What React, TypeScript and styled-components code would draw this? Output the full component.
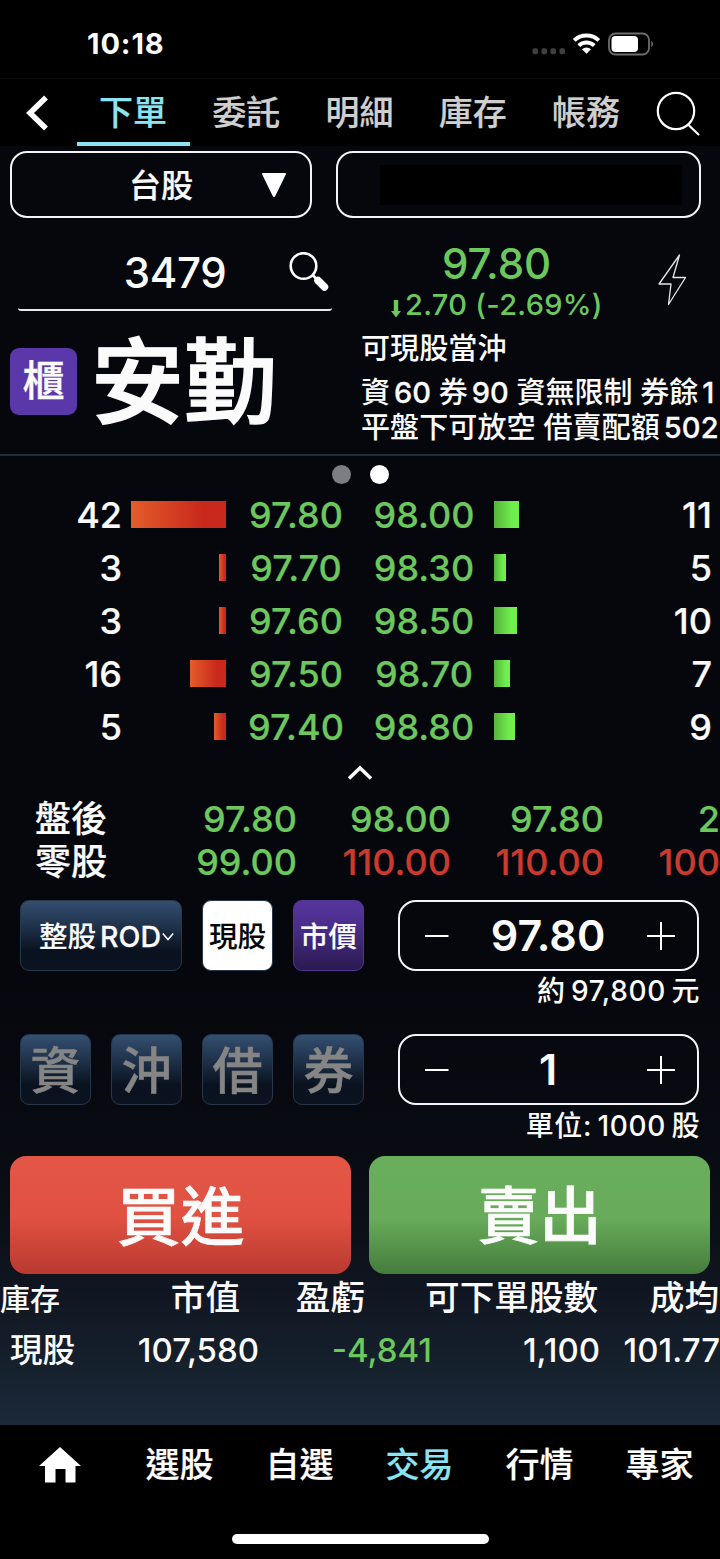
import React from "react";
import styled, { createGlobalStyle } from "styled-components";

const GREEN = "#6cc75d";
const RED = "#cb3a2e";
const CYAN = "#8be4f1";

const Global = createGlobalStyle`
  * { box-sizing: border-box; }
  body {
    margin: 0;
    background: #000;
    color: #fbfbfc;
    font-family: Inter, "Noto Sans CJK TC", sans-serif;
    font-weight: 500;
  }
  button { font: inherit; color: inherit; background: none; border: 0; padding: 0; margin: 0; }
`;

const Screen = styled.div`
  width: 720px;
  height: 1559px;
  overflow: hidden;
  display: flex;
  flex-direction: column;
  white-space: nowrap;
`;

const StatusBar = styled.header`
  height: 79px;
  flex: none;
  display: flex;
  align-items: center;
  padding: 9px 66px 0 87px;
  border-bottom: 1px solid #0b0b0c;
`;

const Clock = styled.time`
  flex: 1;
  font-size: 29px;
  font-weight: 700;
  letter-spacing: 0.9px;
`;

const TopNav = styled.nav`
  height: 67px;
  flex: none;
  display: flex;
  align-items: stretch;
`;

const NavIcon = styled.button<{ $pad: number }>`
  width: 77px;
  flex: none;
  display: flex;
  align-items: center;
  justify-content: center;
  padding-right: ${(p) => p.$pad}px;
`;

const Tab = styled.button<{ $active?: boolean }>`
  flex: 1;
  padding: 4px 1px 0 0;
  font-size: 34px;
  line-height: 59px;
  color: ${(p) => (p.$active ? CYAN : "#cfcfcf")};
  -webkit-text-stroke: 0.2px;
  border-bottom: 4px solid ${(p) => (p.$active ? CYAN : "transparent")};
`;

const Body = styled.main`
  height: 1279px;
  flex: none;
  display: flex;
  flex-direction: column;
  background: linear-gradient(180deg, #06070d 0, #06070d 820px, #090b12 1000px, #0b0f17 1080px, #101621 1144px, #15202c 1214px, #1b2939 1279px);
`;

const SelectRow = styled.div`
  display: flex;
  gap: 24px;
  padding: 5px 0 0 10px;
  flex: none;
`;

const SelectBox = styled.button<{ $w: number }>`
  width: ${(p) => p.$w}px;
  height: 67px;
  border: 2px solid #f4f4f6;
  border-radius: 17px;
  display: flex;
  align-items: center;
  font-size: 32px;
`;

const SelectLabel = styled.span`
  width: 126px;
  margin: 0 38px 3px 86px;
  text-align: center;
  -webkit-text-stroke: 0.2px;
`;

const Redacted = styled.span`
  width: 302px;
  height: 40px;
  margin-left: 42px;
  background: #000;
`;

const Quote = styled.section`
  height: 238px;
  flex: none;
  display: flex;
  border-bottom: 2px solid #222d37;
`;

const QuoteLeft = styled.div`
  width: 361px;
  flex: none;
`;

const CodeField = styled.div`
  width: 314px;
  height: 68px;
  margin: 25px 0 0 18px;
  border-bottom: 2px solid #e9e9ec;
  border-radius: 3px;
  display: flex;
  align-items: center;
  padding-bottom: 8px;
`;

const Code = styled.span`
  width: 271px;
  padding-left: 43px;
  text-align: center;
  font-size: 42px;
  letter-spacing: -0.3px;
`;

const NameRow = styled.div`
  height: 141px;
  display: flex;
  align-items: center;
  padding-left: 10px;
`;

const Market = styled.span`
  width: 67px;
  height: 67px;
  border-radius: 9px;
  background: #5a38a9;
  font-size: 42px;
  line-height: 66px;
  text-align: center;
  -webkit-text-stroke: 0.3px;
`;

const StockName = styled.h1`
  margin: 0 0 0 14px;
  font-size: 93px;
  line-height: 140px;
  font-weight: 500;
  -webkit-text-stroke: 1.4px;
`;

const QuoteRight = styled.div`
  flex: 1;
  min-width: 0;
`;

const PriceRow = styled.div`
  height: 106px;
  display: flex;
  align-items: center;
  color: ${GREEN};
`;

const PriceBlock = styled.div`
  width: 271px;
  padding-top: 22px;
  text-align: center;
`;

const Price = styled.div`
  font-size: 42px;
  line-height: 46px;
  letter-spacing: -0.1px;
`;

const Change = styled.div`
  font-size: 29px;
  line-height: 36px;
  letter-spacing: 0.3px;
  padding-left: 1px;

  svg { margin-right: 4px; vertical-align: -3px; }
`;

const Bolt = styled.svg`
  margin: 18px 0 0 25px;
`;

const Info = styled.div<{ $h: number; $ls?: number }>`
  font-size: 29px;
  height: ${(p) => p.$h}px;
  line-height: ${(p) => p.$h}px;
  letter-spacing: ${(p) => p.$ls ?? 0}px;
`;

const Figure = styled.span<{ $after?: number }>`
  margin-left: 4px;
  margin-right: ${(p) => p.$after ?? 0}px;
  -webkit-text-stroke: 0.3px;
`;

const Dots = styled.div`
  height: 32px;
  flex: none;
  display: flex;
  justify-content: center;
  gap: 19px;
  padding-top: 9px;
`;

const Dot = styled.i<{ $on?: boolean }>`
  width: 19px;
  height: 19px;
  border-radius: 50%;
  background: ${(p) => (p.$on ? "#fff" : "#7d7e83")};
`;

const DepthRow = styled.div`
  height: 53px;
  flex: none;
  display: grid;
  grid-template-columns: 122px 104px 140px 116px 12px 120px 98px;
  align-items: center;
  font-size: 36px;
  -webkit-text-stroke: 0.2px;
`;

const Volume = styled.span`
  text-align: right;
`;

const BidTrack = styled.span`
  display: flex;
  justify-content: flex-end;
`;

const AskTrack = styled.span`
  grid-column: 6;
  display: flex;
`;

const Bar = styled.i<{ $side: "bid" | "ask" }>`
  height: 27px;
  background: ${(p) =>
    p.$side === "bid"
      ? "linear-gradient(90deg, #e45c2b, #c9291c 75%)"
      : "linear-gradient(90deg, #55b43c, #70ee4c 75%)"};
`;

const DepthPrice = styled.span`
  text-align: center;
  color: ${GREEN};
`;

const Collapse = styled.button`
  height: 44px;
  flex: none;
  display: flex;
  justify-content: center;
  padding-top: 12px;
`;

const SessionRow = styled.div`
  height: 43px;
  flex: none;
  display: grid;
  grid-template-columns: 117px 180px 154px 153px 116px;
  align-items: center;
  font-size: 36px;
  line-height: 43px;
`;

const SessionLabel = styled.span`
  padding: 1px 0 0 35px;
  -webkit-text-stroke: 0.2px;
`;

const SessionValue = styled.span<{ $c: string }>`
  text-align: right;
  color: ${(p) => p.$c};
  -webkit-text-stroke: 0.2px;
`;

const ControlRow = styled.div<{ $mt: number }>`
  height: 71px;
  flex: none;
  display: flex;
  margin-top: ${(p) => p.$mt}px;
  padding-left: 20px;
  gap: 20px;
`;

const Chip = styled.button<{ $w?: number; $kind?: "cash" | "market"; $big?: boolean }>`
  width: ${(p) => p.$w ?? 71}px;
  height: 71px;
  flex: none;
  border-radius: 9px;
  border: 1.5px solid ${(p) => (p.$kind === "market" ? "#53368f" : "#26374a")};
  background: ${(p) =>
    p.$kind === "cash"
      ? "#fff"
      : p.$kind === "market"
        ? "linear-gradient(180deg, #56359d 0%, #4b2e8c 35%, #2a1a50 100%)"
        : "linear-gradient(180deg, #344f70 0%, #1d2f47 40%, #0a121f 72%, #0b1320 100%)"};
  color: ${(p) => (p.$kind === "cash" ? "#050505" : p.$big ? "#858585" : "#fbfbfc")};
  font-size: ${(p) => (p.$big ? 50 : 28.5)}px;
  line-height: 68px;
  padding-top: ${(p) => (p.$big ? 3 : 2)}px;
  display: flex;
  align-items: center;
  justify-content: center;
  -webkit-text-stroke: ${(p) => (p.$big ? 0.5 : 0.1)}px;
`;

const OrderType = styled.span`
  display: flex;
  align-items: center;
  padding-left: 11px;
`;

const Stepper = styled.div`
  width: 301px;
  height: 71px;
  margin-left: 14px;
  border: 2px solid #f4f4f6;
  border-radius: 18px;
  display: flex;
  align-items: center;
  justify-content: space-between;
  padding: 0 22px 0 25px;
`;

const StepValue = styled.span`
  flex: 1;
  text-align: center;
  font-size: 43px;
  font-weight: 600;
  margin-bottom: 1px;
`;

const Note = styled.div<{ $h: number }>`
  height: ${(p) => p.$h}px;
  line-height: ${(p) => p.$h}px;
  flex: none;
  padding: 1px 20px 0 0;
  text-align: right;
  font-size: 28px;
  letter-spacing: 0.6px;
  word-spacing: -2.5px;
`;

const Actions = styled.div`
  display: flex;
  flex: none;
  gap: 18px;
  padding: 0 10px;
  margin-top: 10px;
`;

const Action = styled.button<{ $sell?: boolean }>`
  flex: 1;
  height: 118px;
  border-radius: 16px;
  font-size: ${(p) => (p.$sell ? 62 : 64)}px;
  font-weight: 500;
  -webkit-text-stroke: 0.7px;
  padding-top: 3px;
  line-height: 115px;
  background: ${(p) =>
    p.$sell
      ? "linear-gradient(180deg, #69ae5d 0%, #68ac5b 52%, #457c3c 100%)"
      : "linear-gradient(180deg, #e35646 0%, #e05142 52%, #b93930 100%)"};
`;

const HoldingRow = styled.div<{ $h: number }>`
  height: ${(p) => p.$h}px;
  line-height: ${(p) => p.$h}px;
  flex: none;
  display: flex;
`;

const HoldCell = styled.span<{ $w: number; $size?: number; $c?: string; $left?: number; $top?: number }>`
  width: ${(p) => p.$w}px;
  flex: none;
  text-align: ${(p) => (p.$left === undefined ? "right" : "left")};
  padding: ${(p) => p.$top ?? 0}px 0 0 ${(p) => p.$left ?? 0}px;
  font-size: ${(p) => p.$size ?? 34.6}px;
  color: ${(p) => p.$c ?? "inherit"};
`;

const BottomNav = styled.nav`
  height: 80px;
  flex: none;
  display: flex;
  align-items: center;
`;

const NavItem = styled.button<{ $active?: boolean }>`
  flex: 1;
  padding-right: 1px;
  font-size: 34px;
  line-height: 78px;
  color: ${(p) => (p.$active ? CYAN : "#fff")};
  display: flex;
  align-items: center;
  justify-content: center;
  -webkit-text-stroke: 0.2px;
`;

const HomeBar = styled.div`
  width: 257px;
  height: 10px;
  margin: 29px 0 0 232px;
  border-radius: 5px;
  background: #fff;
`;

const StatusIcons = () => (
  <svg width="122" height="28" viewBox="0 0 122 28" fill="none">
    {[0, 9, 18, 27].map((x) => (
      <rect key={x} x={x + 0.5} y="18.2" width="5.5" height="6" rx="1.6" fill="#3f3f41" />
    ))}
    <g stroke="#fff" strokeWidth="4">
      <path d="M42.2 10.4a18 18 0 0 1 24.6 0" />
      <path d="M46.8 15.6a11.4 11.4 0 0 1 15.4 0" />
    </g>
    <path d="M50 19.2a6.6 6.6 0 0 1 9 0l-4.5 4.6z" fill="#fff" />
    <rect x="77" y="3.5" width="40" height="21" rx="6.5" stroke="#6d6d6f" strokeWidth="1.8" />
    <rect x="79.5" y="6" width="26.5" height="16" rx="4" fill="#fff" />
    <path d="M119.3 10.5q3.6 3.5 0 7z" fill="#6d6d6f" />
  </svg>
);

const BackIcon = () => (
  <svg width="24" height="36" viewBox="0 0 24 36" fill="none" stroke="#fff" strokeWidth="5.5">
    <path d="M21 2.5 5 18l16 15.5" />
  </svg>
);

const SearchIcon = () => (
  <svg width="46" height="46" viewBox="0 0 46 46" fill="none" stroke="#fff" strokeWidth="2.2">
    <circle cx="21" cy="21" r="18.2" />
    <path d="m33 34.5 11 10.5" />
  </svg>
);

const LoupeIcon = () => (
  <svg width="40" height="40" viewBox="0 0 40 40" fill="none">
    <circle cx="14.5" cy="14" r="12.8" stroke="#fff" strokeWidth="2.6" />
    <path d="m24 23.5 4 4" stroke="#fff" strokeWidth="2.6" />
    <path d="m29 28.5 6.5 6.5" stroke="#fff" strokeWidth="7.5" strokeLinecap="round" />
  </svg>
);

const bids = [
  { vol: 42, bar: 95, price: "97.80" },
  { vol: 3, bar: 7, price: "97.70" },
  { vol: 3, bar: 7, price: "97.60" },
  { vol: 16, bar: 36, price: "97.50" },
  { vol: 5, bar: 12, price: "97.40" },
];
const asks = [
  { vol: 11, bar: 25, price: "98.00" },
  { vol: 5, bar: 12, price: "98.30" },
  { vol: 10, bar: 23, price: "98.50" },
  { vol: 7, bar: 16, price: "98.70" },
  { vol: 9, bar: 21, price: "98.80" },
];

const sessions = [
  { label: "盤後", cells: [["97.80", GREEN], ["98.00", GREEN], ["97.80", GREEN], ["2", GREEN]] },
  { label: "零股", cells: [["99.00", GREEN], ["110.00", RED], ["110.00", RED], ["100", RED]] },
];

const QuantityStepper = ({ value }: { value: string }) => (
  <Stepper>
    <svg width="24" height="28" viewBox="0 0 24 28" stroke="#fff" strokeWidth="2">
      <path d="M0 14h23.5" />
    </svg>
    <StepValue>{value}</StepValue>
    <svg width="28" height="28" viewBox="0 0 28 28" stroke="#fff" strokeWidth="2">
      <path d="M0 14h28M14 0v28" />
    </svg>
  </Stepper>
);

export default function App() {
  return (
    <Screen>
      <Global />
      <StatusBar>
        <Clock>10:18</Clock>
        <StatusIcons />
      </StatusBar>
      <TopNav>
        <NavIcon $pad={3}>
          <BackIcon />
        </NavIcon>
        {["下單", "委託", "明細", "庫存", "帳務"].map((t, i) => (
          <Tab key={t} $active={i === 0}>
            {t}
          </Tab>
        ))}
        <NavIcon $pad={7}>
          <SearchIcon />
        </NavIcon>
      </TopNav>

      <Body>
        <SelectRow>
          <SelectBox $w={302}>
            <SelectLabel>台股</SelectLabel>
            <svg width="24" height="24" viewBox="0 0 24 24">
              <path d="M1 0h22q1.5 0 .8 1.5L13.3 23q-1.3 1.8-2.6 0L.2 1.500Q-.3 0 1 0z" fill="#fff" />
            </svg>
          </SelectBox>
          <SelectBox $w={365}>
            <Redacted />
          </SelectBox>
        </SelectRow>

        <Quote>
          <QuoteLeft>
            <CodeField>
              <Code>3479</Code>
              <LoupeIcon />
            </CodeField>
            <NameRow>
              <Market>櫃</Market>
              <StockName>安勤</StockName>
            </NameRow>
          </QuoteLeft>
          <QuoteRight>
            <PriceRow>
              <PriceBlock>
                <Price>97.80</Price>
                <Change>
                  <svg width="10" height="18" viewBox="0 0 10 18">
                    <path d="M2.8 0h4.4v11H10l-5 6.5L0 11h2.8z" fill={GREEN} />
                  </svg>
                  2.70 (-2.69%)
                </Change>
              </PriceBlock>
              <Bolt width="30" height="54" viewBox="0 0 30 54" fill="none" stroke="#e8e8ea" strokeWidth="1.3">
                <path d="M22.5 2 2 31h12l-2.5 20.5L28.5 24.5H16z" strokeLinejoin="round" />
              </Bolt>
            </PriceRow>
            <Info $h={50} $ls={0.1}>可現股當沖</Info>
            <Info $h={38}>
              資<Figure>60</Figure> 券<Figure>90</Figure> 資無限制 券餘<Figure>1</Figure>
            </Info>
            <Info $h={32} $ls={0.1}>
              平盤下可放空 借賣配額<Figure>502</Figure>
            </Info>
          </QuoteRight>
        </Quote>

        <Dots>
          <Dot />
          <Dot $on />
        </Dots>
        {bids.map((b, i) => (
          <DepthRow key={b.price}>
            <Volume>{b.vol}</Volume>
            <BidTrack>
              <Bar $side="bid" style={{ width: b.bar }} />
            </BidTrack>
            <DepthPrice>{b.price}</DepthPrice>
            <DepthPrice>{asks[i].price}</DepthPrice>
            <AskTrack>
              <Bar $side="ask" style={{ width: asks[i].bar }} />
            </AskTrack>
            <Volume>{asks[i].vol}</Volume>
          </DepthRow>
        ))}
        <Collapse>
          <svg width="26" height="16" viewBox="0 0 26 16" fill="none" stroke="#fff" strokeWidth="3.5">
            <path d="M2 13.5 13 3l11 10.5" />
          </svg>
        </Collapse>
        {sessions.map((s) => (
          <SessionRow key={s.label}>
            <SessionLabel>{s.label}</SessionLabel>
            {s.cells.map(([v, c], i) => (
              <SessionValue key={i} $c={c}>
                {v}
              </SessionValue>
            ))}
          </SessionRow>
        ))}

        <ControlRow $mt={17}>
          <Chip $w={162}>
            <OrderType>
              整股
              <Figure $after={1}>ROD</Figure>
              <svg width="12" height="10" viewBox="0 0 12 10" fill="none" stroke="#fff" strokeWidth="1.6">
                <path d="m.8 1.5 5.2 6 5.2-6" />
              </svg>
            </OrderType>
          </Chip>
          <Chip $kind="cash">現股</Chip>
          <Chip $kind="market">市價</Chip>
          <QuantityStepper value="97.80" />
        </ControlRow>
        <Note $h={39}>約 97,800 元</Note>
        <ControlRow $mt={24}>
          {["資", "沖", "借", "券"].map((t) => (
            <Chip key={t} $big>
              {t}
            </Chip>
          ))}
          <QuantityStepper value="1" />
        </ControlRow>
        <Note $h={41}>單位: 1000 股</Note>

        <Actions>
          <Action>買進</Action>
          <Action $sell>賣出</Action>
        </Actions>
        <HoldingRow $h={47}>
          <HoldCell $w={120} $size={30} $left={0} $top={2}>庫存</HoldCell>
          <HoldCell $w={120}>市值</HoldCell>
          <HoldCell $w={125}>盈虧</HoldCell>
          <HoldCell $w={233}>可下單股數</HoldCell>
          <HoldCell $w={121}>成均</HoldCell>
        </HoldingRow>
        <HoldingRow $h={57}>
          <HoldCell $w={120} $size={32.5} $left={10} $top={1}>現股</HoldCell>
          <HoldCell $w={139} $size={33} $top={1}>107,580</HoldCell>
          <HoldCell $w={173} $size={33} $top={1} $c={GREEN}>-4,841</HoldCell>
          <HoldCell $w={168} $size={33} $top={1}>1,100</HoldCell>
          <HoldCell $w={120} $size={33} $top={1}>101.77</HoldCell>
        </HoldingRow>
      </Body>

      <BottomNav>
        <NavItem>
          <svg width="42" height="36" viewBox="0 0 42 36">
            <path d="M21 0 42 19h-5.5v16.5h-10V22h-10v13.5H6V19H0z" fill="#fff" />
          </svg>
        </NavItem>
        {["選股", "自選", "交易", "行情", "專家"].map((t) => (
          <NavItem key={t} $active={t === "交易"}>
            {t}
          </NavItem>
        ))}
      </BottomNav>
      <HomeBar />
    </Screen>
  );
}
